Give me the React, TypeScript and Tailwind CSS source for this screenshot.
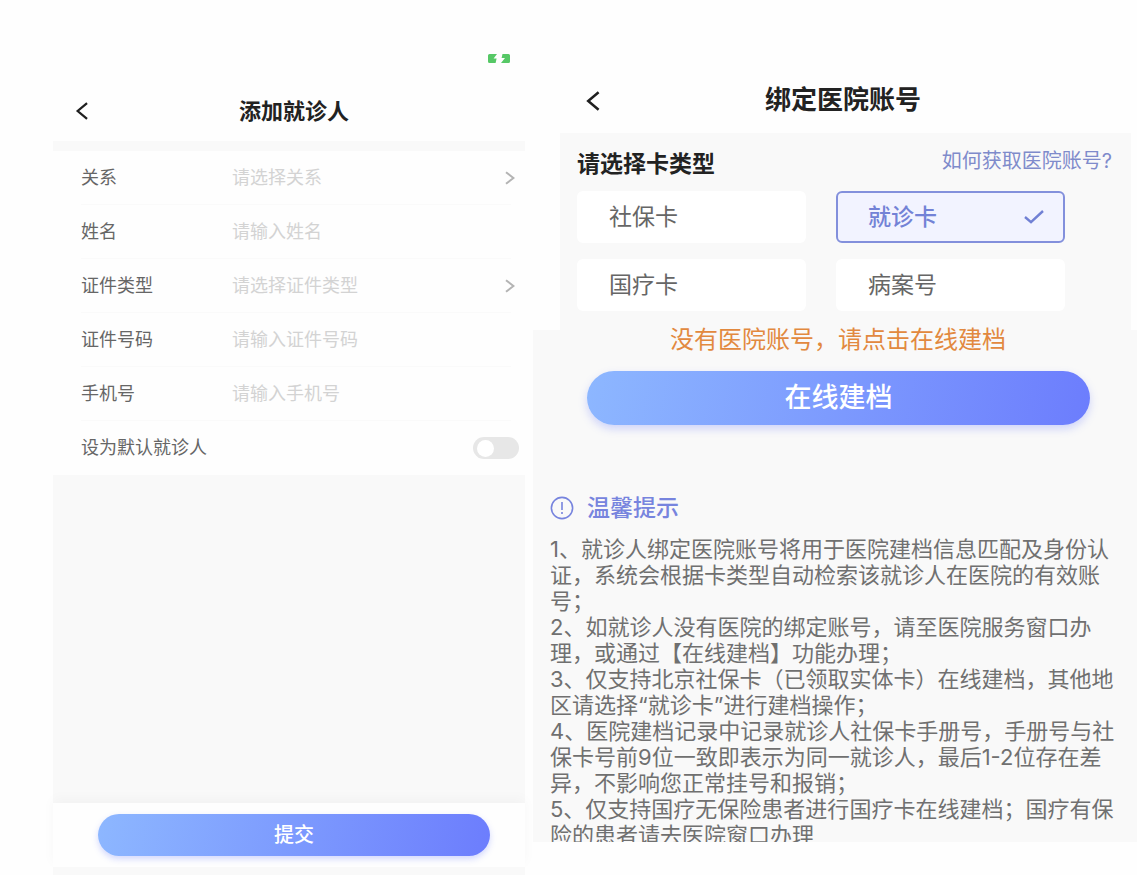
import React, { useState } from "react";

type FieldProps = {
  id: string;
  label: string;
  placeholder: string;
  kind: "select" | "input";
  options?: string[];
};

const FIELDS: FieldProps[] = [
  { id: "relation", label: "关系", placeholder: "请选择关系", kind: "select", options: ["本人", "父母", "子女"] },
  { id: "name", label: "姓名", placeholder: "请输入姓名", kind: "input" },
  { id: "idType", label: "证件类型", placeholder: "请选择证件类型", kind: "select", options: ["身份证", "护照"] },
  { id: "idNumber", label: "证件号码", placeholder: "请输入证件号码", kind: "input" },
  { id: "phone", label: "手机号", placeholder: "请输入手机号", kind: "input" },
];

const CARDS = ["社保卡", "就诊卡", "国疗卡", "病案号"];

const TIPS: string[][] = [
  ["1、就诊人绑定医院账号将用于医院建档信息匹配及身份认", "证，系统会根据卡类型自动检索该就诊人在医院的有效账", "号；"],
  ["2、如就诊人没有医院的绑定账号，请至医院服务窗口办", "理，或通过【在线建档】功能办理；"],
  ["3、仅支持北京社保卡（已领取实体卡）在线建档，其他地", "区请选择“就诊卡”进行建档操作；"],
  ["4、医院建档记录中记录就诊人社保卡手册号，手册号与社", "保卡号前9位一致即表示为同一就诊人，最后1-2位存在差", "异，不影响您正常挂号和报销；"],
  ["5、仅支持国疗无保险患者进行国疗卡在线建档；国疗有保", "险的患者请去医院窗口办理"],
];

function BackIcon({ className }: { className: string }) {
  return (
    <svg viewBox="0 0 14 20" fill="none" stroke="#1f1f1f" strokeWidth="2.5" className={className} aria-hidden="true">
      <path d="M12.6 1.2 2.2 10l10.4 8.8" />
    </svg>
  );
}

function BatteryIcon() {
  return (
    <svg viewBox="0 0 22 9" className="h-[9px] w-[22px]" aria-hidden="true">
      <path d="M1.5 0H9L5.6 4.6H8.6L7.6 9H1.5Q0 9 0 7.5V1.5Q0 0 1.5 0Z" fill="#56c866" />
      <path d="M14.5 0H20.5Q22 0 22 1.5V7.5Q22 9 20.5 9H13L17 4H13.6Z" fill="#56c866" />
    </svg>
  );
}

function Field({ id, label, placeholder, kind, options = [] }: FieldProps) {
  return (
    <div className="flex h-[54px] items-center border-b border-[#fafafa]">
      <label htmlFor={id} className="w-[151px] shrink-0 text-[#666]">
        {label}
      </label>
      {kind === "input" ? (
        <input id={id} placeholder={placeholder} className="min-w-0 flex-1 bg-transparent outline-none placeholder:text-[#d3d3d3]" />
      ) : (
        <>
          <select id={id} defaultValue="" className="min-w-0 flex-1 appearance-none bg-transparent text-[#d3d3d3] outline-none">
            <option value="">{placeholder}</option>
            {options.map((o) => (
              <option key={o}>{o}</option>
            ))}
          </select>
          <svg viewBox="0 0 10 14" fill="none" stroke="#b4b4b4" strokeWidth="2" className="-mr-1 h-3.5 w-2.5" aria-hidden="true">
            <path d="M1 1.2 8.4 7 1 12.8" />
          </svg>
        </>
      )}
    </div>
  );
}

function AddPatient() {
  return (
    <section className="flex min-h-0 min-w-0 flex-col">
      <div className="flex h-[81px] shrink-0 justify-end pt-[54px] pr-[15px]">
        <BatteryIcon />
      </div>
      <header className="flex h-[60px] shrink-0 items-center pr-[29px] pl-[22px]">
        <button type="button" aria-label="返回" className="w-[17px]">
          <BackIcon className="h-[18px] w-[14px]" />
        </button>
        <h1 className="flex-1 text-center text-[22px] font-bold text-[#222]">添加就诊人</h1>
      </header>
      <form className="flex flex-1 flex-col" onSubmit={(e) => e.preventDefault()}>
        <div className="h-2.5 bg-[#f9f9f9]" />
        <div className="pr-[14px] pl-7 text-lg">
          {FIELDS.map((f) => (
            <Field key={f.id} {...f} />
          ))}
          <div className="flex h-[54px] items-center justify-between">
            <label htmlFor="isDefault" className="text-[#666]">
              设为默认就诊人
            </label>
            <input
              id="isDefault"
              type="checkbox"
              role="switch"
              className="-mr-2 flex h-[22px] w-[46px] appearance-none items-center rounded-full bg-[#e7e7e7] px-1 before:size-[17px] before:rounded-full before:bg-white checked:justify-end checked:bg-[#7890fd]"
            />
          </div>
        </div>
        <div className="flex-1 bg-[#f9f9f9]" />
        <div className="px-[35px] pt-[11px] pb-[11px] pl-[45px] shadow-[0_-4px_12px_rgba(0,0,0,0.03)]">
          <button
            type="submit"
            className="h-[42px] w-full rounded-full bg-linear-[100deg,#8db7ff,#6c7dfd] text-[20px] font-medium text-white shadow-[0_3px_6px_rgba(108,125,253,0.3)]"
          >
            提交
          </button>
        </div>
        <div className="h-2 bg-[#f9f9f9]" />
      </form>
    </section>
  );
}

function CardTypes() {
  const [selected, setSelected] = useState("就诊卡");
  return (
    <div role="radiogroup" aria-labelledby="cardTypeTitle" className="mt-2 mr-[47px] grid grid-cols-2 gap-x-[30px] gap-y-4">
      {CARDS.map((card) => {
        const active = card === selected;
        return (
          <label
            key={card}
            className={
              active
                ? "flex h-[52px] items-center justify-between rounded-md border-2 border-[#8390dc] bg-[#f2f3ff] pr-[19px] pl-[30px] text-[23px] font-medium text-[#7382d6]"
                : "flex h-[52px] items-center rounded-md border-2 border-white bg-white pl-[30px] text-[23px] text-[#666]"
            }
          >
            <input type="radio" name="cardType" value={card} checked={active} onChange={() => setSelected(card)} className="sr-only" />
            {card}
            {active && (
              <svg viewBox="0 0 20 14" fill="none" stroke="#7180d4" strokeWidth="2.4" className="h-3.5 w-5" aria-hidden="true">
                <path d="M1 7 7 12.2 19 1" />
              </svg>
            )}
          </label>
        );
      })}
    </div>
  );
}

function BindAccount() {
  return (
    <section className="flex min-h-0 min-w-0 flex-col pb-[33px]">
      <header className="mr-1.5 ml-[27px] flex h-[133px] shrink-0 items-center pt-[65px] pr-[47px] pl-[26px]">
        <button type="button" aria-label="返回" className="w-4 pt-1">
          <BackIcon className="h-5 w-[14px]" />
        </button>
        <h1 className="flex-1 text-center text-[26px] font-bold text-[#222]">绑定医院账号</h1>
      </header>
      <div className="mr-1.5 ml-[27px] shrink-0 bg-[#f9f9f9] pt-3 pr-[19px] pb-[19px] pl-[17px]">
        <div className="flex items-start justify-between">
          <h2 id="cardTypeTitle" className="text-[23px] leading-[38px] font-bold text-[#222]">
            请选择卡类型
          </h2>
          <a href="#help" className="text-[20px] leading-8 text-[#7f8bcb]">
            如何获取医院账号?
          </a>
        </div>
        <CardTypes />
      </div>
      <div className="flex min-h-0 flex-1 flex-col bg-[#f9f9f9]">
        <p className="pl-1.5 text-center text-[24px] leading-5 text-[#e2893f]">没有医院账号，请点击在线建档</p>
        <div className="mt-[21px] pr-[47px] pl-[54px]">
          <button
            type="button"
            className="h-[54px] w-full rounded-full bg-linear-[100deg,#8db7ff,#6c7dfd] text-[27px] font-medium text-white shadow-[0_4px_8px_rgba(108,125,253,0.3)]"
          >
            在线建档
          </button>
        </div>
        <h2 className="mt-[67px] flex items-center gap-[13px] pl-[17px] text-[23px] leading-8 font-medium text-[#7784de]">
          <svg viewBox="0 0 24 24" fill="none" stroke="#7784de" strokeWidth="1.6" className="size-6" aria-hidden="true">
            <circle cx="12" cy="12" r="10.6" />
            <path d="M12 6v8M12 16v2" />
          </svg>
          温馨提示
        </h2>
        <ol className="mt-3 min-h-0 flex-1 overflow-hidden pl-[17px] text-[22px] leading-[26px] whitespace-nowrap text-[#707070]">
          {TIPS.map((lines) => (
            <li key={lines[0]}>
              {lines.map((line, i) => (
                <React.Fragment key={line}>
                  {i > 0 && <br />}
                  {line}
                </React.Fragment>
              ))}
            </li>
          ))}
        </ol>
      </div>
    </section>
  );
}

export default function App() {
  return (
    <main
      lang="zh-CN"
      className="grid h-screen grid-cols-[472fr_604fr] grid-rows-1 gap-2 bg-[#fefefe] pl-[53px] font-['Inter','Noto_Sans_CJK_SC',sans-serif]"
    >
      <AddPatient />
      <BindAccount />
    </main>
  );
}
